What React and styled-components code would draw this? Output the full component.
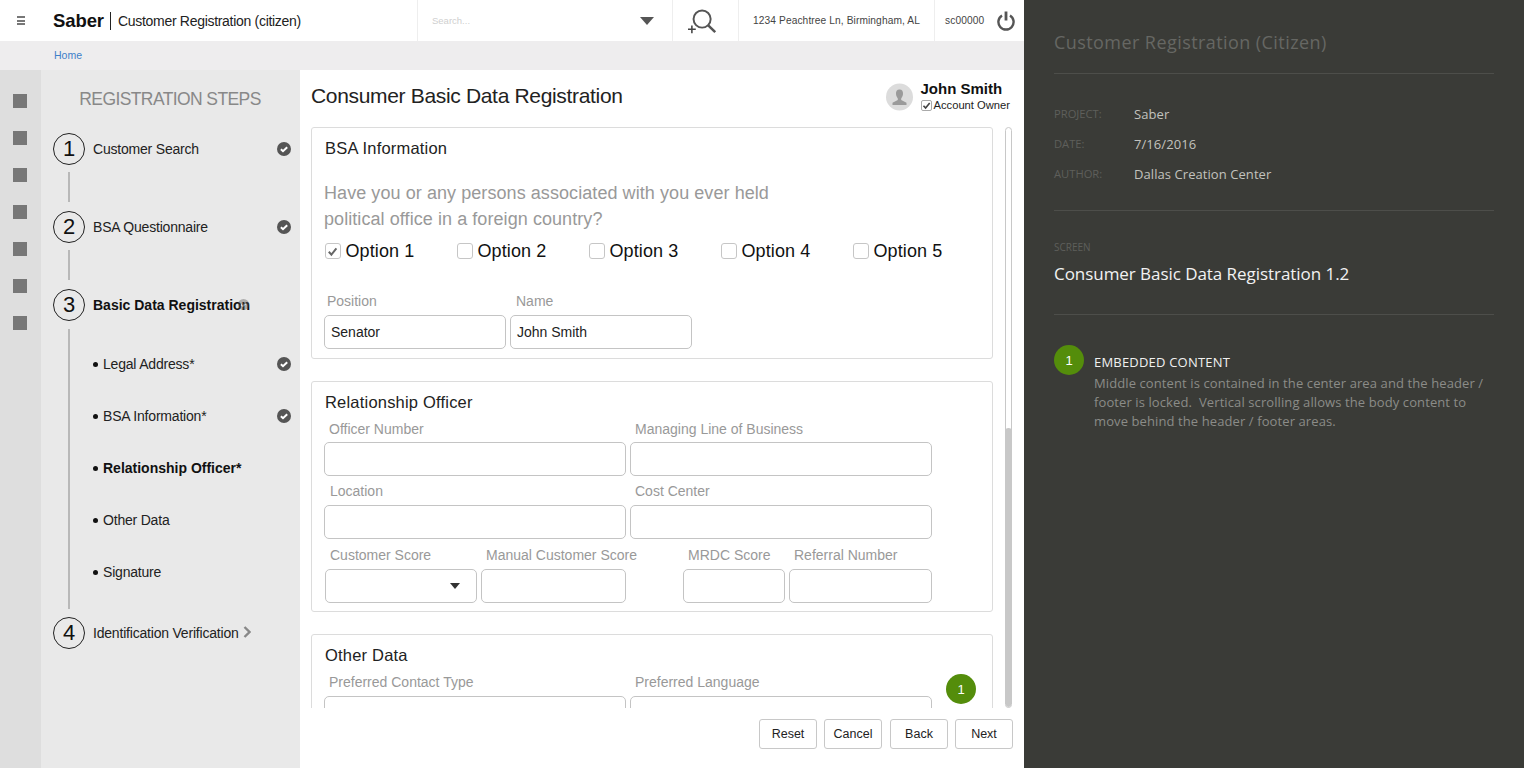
import React from "react";
import styled, { createGlobalStyle } from "styled-components";

const Global = createGlobalStyle`
  html, body {
    margin: 0;
    padding: 0;
    height: 100%;
    overflow: hidden;
  }
  body {
    font-family: "Liberation Sans", Arial, sans-serif;
    color: #111;
  }
  * {
    box-sizing: border-box;
  }
`;

const Page = styled.div`
  width: 1524px;
  height: 768px;
  display: flex;
`;

const Screen = styled.div`
  width: 1024px;
  height: 100%;
  display: flex;
  flex-direction: column;
  background: #fff;
`;

/* top bar */
const Header = styled.header`
  height: 41px;
  display: flex;
  flex: none;
  background: #fff;
`;
const Brand = styled.div`
  width: 417px;
  display: flex;
  align-items: center;
  padding-left: 17px;
`;
const Burger = styled.div`
  width: 8px;
  height: 9px;
  margin-right: 28px;
  border-top: 2px solid #777;
  border-bottom: 2px solid #777;
  position: relative;
  &::after {
    content: "";
    position: absolute;
    left: 0;
    right: 0;
    top: 1.5px;
    height: 2px;
    background: #777;
  }
`;
const Logo = styled.span`
  width: 58px;
  flex: none;
  font-size: 18.5px;
  font-weight: 700;
  letter-spacing: -0.1px;
  border-right: 1px solid #222;
  line-height: 18px;
  margin-right: 7px;
`;
const AppName = styled.span`
  font-size: 14px;
  letter-spacing: -0.3px;
  color: #222;
`;
const HeaderCell = styled.div`
  width: ${({ $w }) => $w}px;
  display: flex;
  align-items: center;
  justify-content: ${({ $between }) => ($between ? "space-between" : "flex-start")};
  padding: 0 ${({ $pad }) => $pad || 0}px;
  border-left: 1px solid #eeeeee;
`;
const SearchHint = styled.span`
  flex: 1;
  font-size: 9.5px;
  color: #cfcfcf;
`;
const Triangle = styled.span`
  width: 0;
  height: 0;
  margin-right: 4px;
  border-left: 7px solid transparent;
  border-right: 7px solid transparent;
  border-top: 8px solid #555;
`;
const HeaderText = styled.span`
  font-size: 10.2px;
  color: #444;
  white-space: nowrap;
  letter-spacing: 0.1px;
`;
const Crumbs = styled.div`
  height: 29px;
  flex: none;
  background: #eeedee;
  display: flex;
  align-items: center;
  padding: 0 0 1px 54px;
  font-size: 10.5px;
  color: #3d7fc9;
`;

/* body */
const Body = styled.div`
  flex: 1;
  display: flex;
  min-height: 0;
`;
const Rail = styled.nav`
  width: 41px;
  background: #dedede;
  display: flex;
  flex-direction: column;
  align-items: center;
  gap: 23px;
  padding: 24px 1px 0 0;
`;
const RailItem = styled.div`
  width: 14px;
  height: 14px;
  background: #777;
`;

/* steps column */
const Steps = styled.aside`
  width: 259px;
  background: #e9e9e9;
  padding: 0 9px 0 12px;
`;
const StepsTitle = styled.div`
  height: 63px;
  padding-top: 19px;
  text-align: center;
  font-size: 17.5px;
  letter-spacing: -0.6px;
  line-height: 20px;
  color: #888;
  padding-right: 4px;
`;
const StepRow = styled.div`
  height: 32px;
  display: flex;
  align-items: center;
  position: relative;
`;
const Circle = styled.div`
  width: 32px;
  height: 32px;
  flex: none;
  border: 1px solid #222;
  border-radius: 50%;
  display: flex;
  align-items: center;
  justify-content: center;
  font-size: 22px;
  margin-right: 8px;
`;
const StepLabel = styled.span`
  flex: 1;
  font-size: 14px;
  letter-spacing: ${({ $bold }) => ($bold ? 0 : -0.2)}px;
  font-weight: ${({ $bold }) => ($bold ? 700 : 400)};
  color: ${({ $bold }) => ($bold ? "#111" : "#222")};
`;
const Connector = styled.div`
  width: 2px;
  height: 30px;
  margin: 7px 0 9px 15px;
  background: #b8b8b8;
`;
const SubList = styled.div`
  height: 280px;
  margin: 8px 0 8px 15px;
  padding: 9px 0 0 0;
  border-left: 2px solid #b8b8b8;
`;
const SubRow = styled.div`
  height: 52px;
  display: flex;
  align-items: center;
  padding-left: 23px;
`;
const Dot = styled.span`
  width: 5px;
  height: 5px;
  border-radius: 50%;
  background: #111;
  margin-right: 5px;
  flex: none;
`;
const GhostCheck = styled.span`
  position: absolute;
  left: 185px;
  top: 10px;
  opacity: 0.4;
  display: flex;
`;
const Chevron = styled.svg`
  position: absolute;
  left: 190px;
  top: 9px;
`;

const Check = ({ size = 14 }) => (
  <svg width={size} height={size} viewBox="0 0 14 14" style={{ flex: "none" }}>
    <circle cx="7" cy="7" r="7" fill="#555" />
    <path d="M3.9 7.2 L6 9.2 L10.2 5.2" fill="none" stroke="#fff" strokeWidth="2" />
  </svg>
);

/* main form */
const Main = styled.main`
  flex: 1;
  display: flex;
  flex-direction: column;
  min-width: 0;
  padding-left: 11px;
  position: relative;
`;
const TitleRow = styled.div`
  height: 57px;
  flex: none;
  display: flex;
  justify-content: space-between;
  padding: 13px 14px 0 0;
`;
const PageTitle = styled.h1`
  margin: 0;
  font-size: 21px;
  font-weight: 400;
  line-height: 26px;
  letter-spacing: -0.33px;
  color: #222;
`;
const Owner = styled.div`
  display: flex;
  gap: 8px;
`;
const OwnerName = styled.div`
  font-size: 15px;
  font-weight: 700;
  line-height: 17px;
  margin-top: -3px;
`;
const OwnerRole = styled.div`
  display: flex;
  align-items: center;
  gap: 2px;
  font-size: 11.2px;
  line-height: 14px;
  color: #222;
  margin-top: 1px;
`;
const TinyBox = styled.span`
  width: 11px;
  height: 11px;
  border: 1px solid #aaa;
  border-radius: 2px;
  display: flex;
  align-items: center;
  justify-content: center;
`;
const Scroller = styled.div`
  height: 581px;
  flex: none;
  display: flex;
  overflow: hidden;
`;
const Sections = styled.div`
  width: 682px;
  display: flex;
  flex-direction: column;
  gap: 22px;
  flex: none;
`;
const Section = styled.section`
  height: ${({ $h }) => $h}px;
  flex: none;
  border: 1px solid #dcdcdc;
  border-radius: 3px;
  padding: ${({ $top }) => $top}px 12px 0 12px;
`;
const SectionTitle = styled.h2`
  margin: 0 0 0 1px;
  font-size: 16.5px;
  font-weight: 400;
  line-height: 18px;
  letter-spacing: 0.2px;
  color: #222;
`;
const Question = styled.p`
  margin: 23px 0 0;
  width: 480px;
  font-size: 18px;
  line-height: 26px;
  letter-spacing: 0.07px;
  color: #999;
`;
const Options = styled.div`
  display: flex;
  margin-top: 6px;
  height: 26px;
  align-items: center;
`;
const Option = styled.label`
  width: 132px;
  flex: none;
  display: flex;
  align-items: center;
  font-size: 18px;
  letter-spacing: 0.1px;
  color: #111;
  padding-left: 0.5px;
  gap: 5px;
`;
const Box = styled.span`
  width: 16px;
  height: 16px;
  border: 1px solid #c6c6c6;
  border-radius: 3px;
  display: flex;
  align-items: center;
  justify-content: center;
`;
const Fields = styled.div`
  display: flex;
  gap: 4px;
  margin-top: ${({ $mt }) => $mt || 0}px;
  margin-left: ${({ $ml }) => $ml || 0}px;
`;
const FieldWrap = styled.div`
  width: ${({ $w }) => $w}px;
  flex: none;
  margin-right: ${({ $after }) => $after || 0}px;
`;
const FieldLabel = styled.div`
  font-size: 14px;
  line-height: 16px;
  height: ${({ $h }) => $h}px;
  color: #999;
  white-space: nowrap;
  padding-left: ${({ $pl }) => $pl || 0}px;
`;
const Input = styled.div`
  height: 34px;
  border: 1px solid #c4c4c4;
  border-radius: 5px;
  display: flex;
  align-items: center;
  padding: 0 16px 0 6px;
  font-size: 14px;
  color: #222;
`;
const SmallTriangle = styled.span`
  width: 0;
  height: 0;
  margin-left: auto;
  border-left: 5.5px solid transparent;
  border-right: 5.5px solid transparent;
  border-top: 6px solid #333;
`;
const Track = styled.div`
  width: 7px;
  height: 100%;
  margin-left: 12px;
  border: 1px solid #c8c8c8;
  border-radius: 4px;
  position: relative;
  overflow: hidden;
`;
const Thumb = styled.div`
  position: absolute;
  left: -1px;
  right: -1px;
  top: 300px;
  bottom: 0;
  background: #c8c8c8;
  border-radius: 4px;
`;
const Marker = styled.div`
  position: absolute;
  left: 646px;
  top: 604px;
  width: 30px;
  height: 30px;
  border-radius: 50%;
  background: #548d0b;
  color: #fff;
  font-size: 13px;
  display: flex;
  align-items: center;
  justify-content: center;
`;
const Footer = styled.footer`
  flex: 1;
  display: flex;
  justify-content: flex-end;
  gap: 7px;
  padding: 11px 11px 0 0;
`;
const Button = styled.button`
  width: 58px;
  height: 30px;
  margin-left: ${({ $ml }) => $ml || 0}px;
  background: #fff;
  border: 1px solid #c8c8c8;
  border-radius: 3px;
  font-family: inherit;
  font-size: 12.5px;
  color: #222;
  padding: 0;
`;

/* annotation panel */
const Notes = styled.aside`
  width: 500px;
  height: 100%;
  background: #3a3b37;
  padding: 0 30px;
  font-family: "Open Sans", "Noto Sans", sans-serif;
`;
const NotesTitle = styled.div`
  height: 74px;
  padding-top: 30px;
  font-size: 18px;
  line-height: 25px;
  letter-spacing: 0.43px;
  color: #666763;
  border-bottom: 1px solid #4d4e4a;
`;
const Meta = styled.div`
  height: 137px;
  padding-top: 25px;
  border-bottom: 1px solid #4d4e4a;
`;
const MetaRow = styled.div`
  height: 30px;
  display: flex;
  align-items: center;
`;
const MetaKey = styled.span`
  width: 80px;
  font-size: 11.2px;
  color: #5e5f5b;
  margin-top: -2px;
`;
const MetaValue = styled.span`
  font-size: 13px;
  letter-spacing: 0.07px;
  color: #c2c2be;
`;
const ScreenBlock = styled.div`
  height: 104px;
  padding-top: 28px;
  border-bottom: 1px solid #4d4e4a;
`;
const ScreenKey = styled.div`
  font-size: 10px;
  line-height: 16px;
  color: #5e5f5b;
`;
const ScreenName = styled.div`
  font-size: 17px;
  line-height: 24px;
  letter-spacing: -0.05px;
  margin-top: 7px;
  color: #f2f2f2;
`;
const Note = styled.div`
  display: flex;
  gap: 10px;
  padding-top: 30px;
`;
const NoteNum = styled.div`
  width: 30px;
  height: 30px;
  flex: none;
  border-radius: 50%;
  background: #548d0b;
  color: #fff;
  font-family: "Liberation Sans", Arial, sans-serif;
  font-size: 13px;
  display: flex;
  align-items: center;
  justify-content: center;
`;
const NoteHead = styled.div`
  font-size: 13px;
  line-height: 19px;
  letter-spacing: 0.2px;
  margin-top: 8px;
  color: #f0f0f0;
`;
const NoteText = styled.div`
  font-size: 13px;
  line-height: 19px;
  letter-spacing: 0.1px;
  margin-top: 2px;
  color: #8b8c88;
  white-space: pre;
`;

const subSteps = [
  { label: "Legal Address*", done: true },
  { label: "BSA Information*", done: true },
  { label: "Relationship Officer*", bold: true },
  { label: "Other Data" },
  { label: "Signature" },
];
const options = ["Option 1", "Option 2", "Option 3", "Option 4", "Option 5"];

const Tick = ({ size = 11, color = "#666" }) => (
  <svg width={size} height={size} viewBox="0 0 11 11">
    <path d="M1.8 5.8 L4.4 8.6 L9.4 2.4" fill="none" stroke={color} strokeWidth="2" />
  </svg>
);

const Field = ({ label, w, pl, value, after, select, gap = 22 }) => (
  <FieldWrap $w={w} $after={after}>
    <FieldLabel $pl={pl} $h={gap}>{label}</FieldLabel>
    <Input>
      {value}
      {select && <SmallTriangle />}
    </Input>
  </FieldWrap>
);

export default function App() {
  return (
    <Page>
      <Global />
      <Screen>
        <Header>
          <Brand>
            <Burger />
            <Logo>Saber</Logo>
            <AppName>Customer Registration (citizen)</AppName>
          </Brand>
          <HeaderCell $w={255} $pad={14}>
            <SearchHint>Search...</SearchHint>
            <Triangle />
          </HeaderCell>
          <HeaderCell $w={66} $pad={15}>
            <svg width="36" height="30" viewBox="0 0 36 30">
              <circle cx="14.5" cy="13" r="8.8" fill="none" stroke="#555" strokeWidth="2" />
              <path d="M20.8 19.5 L28 26.5" stroke="#555" strokeWidth="2.6" />
              <path d="M0 23.5 H8 M4 19.5 V27.5" stroke="#444" strokeWidth="1.6" />
            </svg>
          </HeaderCell>
          <HeaderCell $w={196} $pad={14}>
            <HeaderText>1234 Peachtree Ln, Birmingham, AL</HeaderText>
          </HeaderCell>
          <HeaderCell $w={90} $pad={10} $between>
            <HeaderText>sc00000</HeaderText>
            <svg width="18" height="20" viewBox="0 0 18 20" style={{ marginRight: -1 }}>
              <path d="M5 4.5 A7.6 7.6 0 1 0 13 4.5" fill="none" stroke="#555" strokeWidth="2.4" />
              <path d="M9 0.5 V9.5" stroke="#555" strokeWidth="2.8" />
            </svg>
          </HeaderCell>
        </Header>
        <Crumbs>Home</Crumbs>
        <Body>
          <Rail>
            {[0, 1, 2, 3, 4, 5, 6].map((i) => (
              <RailItem key={i} />
            ))}
          </Rail>
          <Steps>
            <StepsTitle>REGISTRATION STEPS</StepsTitle>
            <StepRow>
              <Circle>1</Circle>
              <StepLabel>Customer Search</StepLabel>
              <Check />
            </StepRow>
            <Connector />
            <StepRow>
              <Circle>2</Circle>
              <StepLabel>BSA Questionnaire</StepLabel>
              <Check />
            </StepRow>
            <Connector />
            <StepRow>
              <Circle>3</Circle>
              <StepLabel $bold>Basic Data Registration</StepLabel>
              <GhostCheck>
                <Check size={11} />
              </GhostCheck>
            </StepRow>
            <SubList>
              {subSteps.map((s) => (
                <SubRow key={s.label}>
                  <Dot />
                  <StepLabel $bold={s.bold}>{s.label}</StepLabel>
                  {s.done && <Check />}
                </SubRow>
              ))}
            </SubList>
            <StepRow>
              <Circle>4</Circle>
              <StepLabel>Identification Verification</StepLabel>
              <Chevron width="8" height="12" viewBox="0 0 8 12">
                <path d="M1.5 1 L6.5 6 L1.5 11" fill="none" stroke="#888" strokeWidth="2.4" />
              </Chevron>
            </StepRow>
          </Steps>
          <Main>
            <TitleRow>
              <PageTitle>Consumer Basic Data Registration</PageTitle>
              <Owner>
                <svg width="27" height="28" viewBox="0 0 27 28">
                  <circle cx="13.5" cy="14" r="13.5" fill="#dcdcdc" />
                  <path d="M13.5 6.5 C10.8 6.5 9.8 8.6 10 11 C10.2 13 11 14.4 11.8 15.4 V17 L6.5 19.8 V22 H20.5 V19.8 L15.2 17 V15.4 C16 14.4 16.8 13 17 11 C17.2 8.6 16.2 6.5 13.5 6.5 Z" fill="#9a9a9a" />
                </svg>
                <div>
                  <OwnerName>John Smith</OwnerName>
                  <OwnerRole>
                    <TinyBox>
                      <Tick size={9} color="#444" />
                    </TinyBox>
                    Account Owner
                  </OwnerRole>
                </div>
              </Owner>
            </TitleRow>
            <Scroller>
              <Sections>
                <Section $h={232} $top={11}>
                  <SectionTitle>BSA Information</SectionTitle>
                  <Question>
                    Have you or any persons associated with you ever held political office in a foreign country?
                  </Question>
                  <Options>
                    {options.map((o, i) => (
                      <Option key={o}>
                        <Box>{i === 0 && <Tick />}</Box>
                        {o}
                      </Option>
                    ))}
                  </Options>
                  <Fields $mt={29}>
                    <Field label="Position" w={182} pl={3} value="Senator" />
                    <Field label="Name" w={182} pl={6} value="John Smith" />
                  </Fields>
                </Section>
                <Section $h={231} $top={11}>
                  <SectionTitle>Relationship Officer</SectionTitle>
                  <Fields $mt={10}>
                    <Field label="Officer Number" w={302} pl={5} gap={21} />
                    <Field label="Managing Line of Business" w={302} pl={5} gap={21} />
                  </Fields>
                  <Fields $mt={7}>
                    <Field label="Location" w={302} pl={6} />
                    <Field label="Cost Center" w={302} pl={5} />
                  </Fields>
                  <Fields $mt={8} $ml={1}>
                    <Field label="Customer Score" w={152} pl={5} select />
                    <Field label="Manual Customer Score" w={145} pl={5} after={53} />
                    <Field label="MRDC Score" w={102} pl={5} />
                    <Field label="Referral Number" w={143} pl={5} />
                  </Fields>
                </Section>
                <Section $h={232} $top={11}>
                  <SectionTitle>Other Data</SectionTitle>
                  <Fields $mt={10}>
                    <Field label="Preferred Contact Type" w={302} pl={5} />
                    <Field label="Preferred Language" w={302} pl={5} />
                  </Fields>
                </Section>
              </Sections>
              <Track>
                <Thumb />
              </Track>
            </Scroller>
            <Marker>1</Marker>
            <Footer>
              <Button>Reset</Button>
              <Button>Cancel</Button>
              <Button $ml={1}>Back</Button>
              <Button>Next</Button>
            </Footer>
          </Main>
        </Body>
      </Screen>
      <Notes>
        <NotesTitle>Customer Registration (Citizen)</NotesTitle>
        <Meta>
          <MetaRow>
            <MetaKey>PROJECT:</MetaKey>
            <MetaValue>Saber</MetaValue>
          </MetaRow>
          <MetaRow>
            <MetaKey>DATE:</MetaKey>
            <MetaValue>7/16/2016</MetaValue>
          </MetaRow>
          <MetaRow>
            <MetaKey>AUTHOR:</MetaKey>
            <MetaValue>Dallas Creation Center</MetaValue>
          </MetaRow>
        </Meta>
        <ScreenBlock>
          <ScreenKey>SCREEN</ScreenKey>
          <ScreenName>Consumer Basic Data Registration 1.2</ScreenName>
        </ScreenBlock>
        <Note>
          <NoteNum>1</NoteNum>
          <div>
            <NoteHead>EMBEDDED CONTENT</NoteHead>
            <NoteText>
              {"Middle content is contained in the center area and the header /\nfooter is locked.  Vertical scrolling allows the body content to\nmove behind the header / footer areas."}
            </NoteText>
          </div>
        </Note>
      </Notes>
    </Page>
  );
}
